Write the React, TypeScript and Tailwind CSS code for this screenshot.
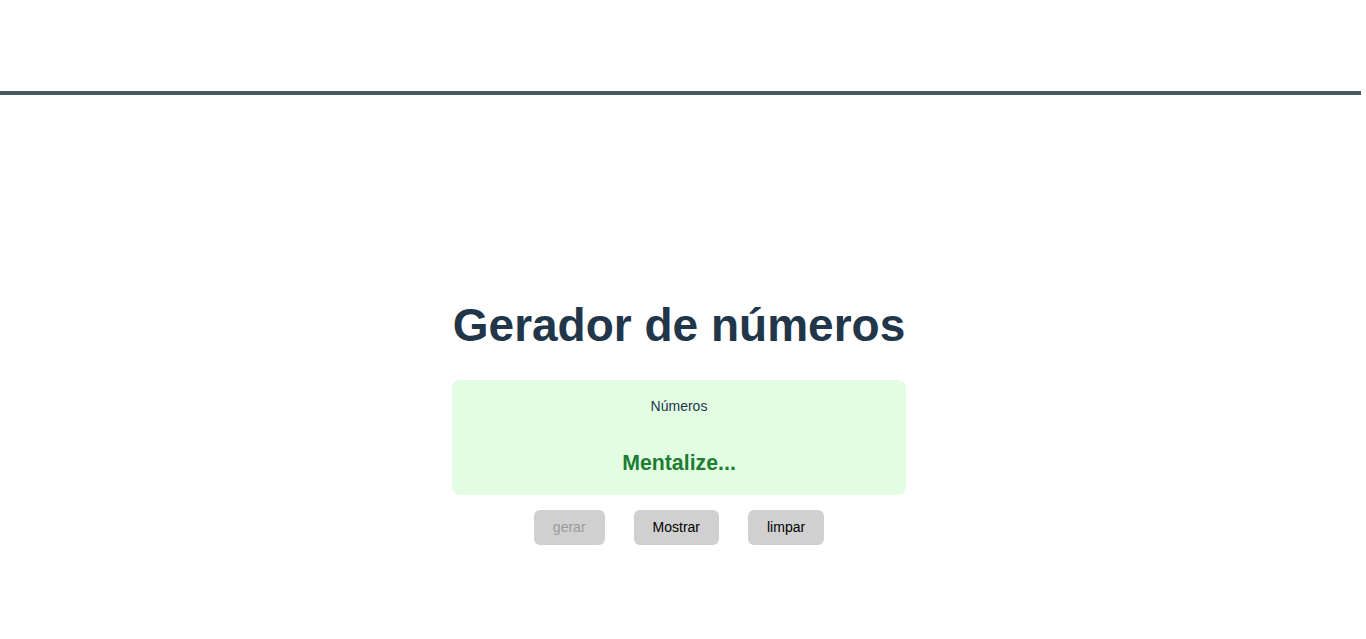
import React from "react";

export default function App() {
  return (
    <div className="min-h-[639px] w-full bg-white" style={{ fontFamily: '"Liberation Sans", Arial, sans-serif' }}>
      <div className="h-[95px] w-[1361px] border-b-4 border-[#455a64]" />
      <div className="flex flex-col items-center pt-[204px] w-[1358px]">
        <h1 className="text-[46px] font-bold leading-[53px] text-[#22364a]">Gerador de números</h1>
        <div className="mt-[28px] w-[454px] rounded-lg bg-[#e3fde3] pt-[18px] pb-[19px] flex flex-col items-center">
          <p className="text-[14px] leading-[16px] text-[#22364a]">Números</p>
          <p className="mt-[37px] text-[21.3px] font-bold leading-[25px] text-[#1e7d32]">Mentalize...</p>
        </div>
        <div className="mt-[15px] flex gap-[29px]">
          <button className="h-[35px] rounded-md bg-[#d0d0d0] px-[19px] text-[14px] text-[#9a9a9a]" disabled>gerar</button>
          <button className="h-[35px] rounded-md bg-[#d0d0d0] px-[19px] text-[14px] text-black">Mostrar</button>
          <button className="h-[35px] rounded-md bg-[#d0d0d0] px-[19px] text-[14px] text-black">limpar</button>
        </div>
      </div>
    </div>
  );
}
